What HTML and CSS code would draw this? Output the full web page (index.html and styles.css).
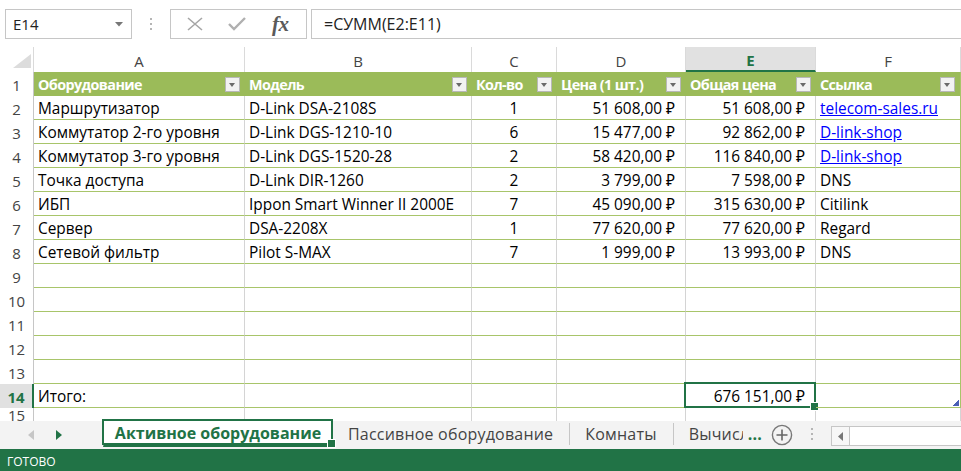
FILE: index.html
```html
<!DOCTYPE html>
<html lang="ru">
<head>
<meta charset="utf-8">
<link rel="stylesheet" href="styles.css">
</head>
<body>
<div class="app">
  <div class="fbar">
    <div class="namebox"><span>E14</span><svg class="nb-caret" width="8" height="5" viewBox="0 0 8 5"><path d="M0 0h8L4 4.5z" fill="#777"/></svg></div>
    <div class="vdots"><i></i><i></i><i></i></div>
    <div class="fxbtns">
      <svg width="18" height="14" viewBox="0 0 18 14"><path d="M2 1l14 12M16 1L2 13" stroke="#a6a6a6" stroke-width="1.6" fill="none"/></svg>
      <svg width="18" height="14" viewBox="0 0 18 14"><path d="M1 7l5 5L17 1" stroke="#b0b0b0" stroke-width="2.4" fill="none"/></svg>
      <span class="fx">fx</span>
    </div>
    <div class="formula">=СУММ(E2:E11)</div>
  </div>

  <div class="sheet">
    <div class="corner"><svg width="18" height="14" viewBox="0 0 18 14"><path d="M18 0V14H0z" fill="#dcdcdc"/></svg></div>
    <div class="ch">A</div><div class="ch">B</div><div class="ch">C</div><div class="ch">D</div><div class="ch sel">E</div><div class="ch">F</div>

    <div class="rh">1</div>
    <div class="th">Оборудование<span class="flt"></span></div>
    <div class="th">Модель<span class="flt"></span></div>
    <div class="th">Кол-во<span class="flt"></span></div>
    <div class="th">Цена (1 шт.)<span class="flt"></span></div>
    <div class="th">Общая цена<span class="flt"></span></div>
    <div class="th lastc">Ссылка<span class="flt"></span></div>

    <div class="rh">2</div>
    <div class="c">Маршрутизатор</div><div class="c">D-Link DSA-2108S</div><div class="c ctr">1</div><div class="c num">51 608,00 ₽</div><div class="c num">51 608,00 ₽</div><div class="c lastc"><a href="#" class="lnk">telecom-sales.ru</a></div>

    <div class="rh">3</div>
    <div class="c">Коммутатор 2-го уровня</div><div class="c">D-Link DGS-1210-10</div><div class="c ctr">6</div><div class="c num">15 477,00 ₽</div><div class="c num">92 862,00 ₽</div><div class="c lastc"><a href="#" class="lnk">D-link-shop</a></div>

    <div class="rh">4</div>
    <div class="c">Коммутатор 3-го уровня</div><div class="c">D-Link DGS-1520-28</div><div class="c ctr">2</div><div class="c num">58 420,00 ₽</div><div class="c num">116 840,00 ₽</div><div class="c lastc"><a href="#" class="lnk">D-link-shop</a></div>

    <div class="rh">5</div>
    <div class="c">Точка доступа</div><div class="c">D-Link DIR-1260</div><div class="c ctr">2</div><div class="c num">3 799,00 ₽</div><div class="c num">7 598,00 ₽</div><div class="c lastc">DNS</div>

    <div class="rh">6</div>
    <div class="c">ИБП</div><div class="c">Ippon Smart Winner II 2000E</div><div class="c ctr">7</div><div class="c num">45 090,00 ₽</div><div class="c num">315 630,00 ₽</div><div class="c lastc">Citilink</div>

    <div class="rh">7</div>
    <div class="c">Сервер</div><div class="c">DSA-2208X</div><div class="c ctr">1</div><div class="c num">77 620,00 ₽</div><div class="c num">77 620,00 ₽</div><div class="c lastc">Regard</div>

    <div class="rh">8</div>
    <div class="c">Сетевой фильтр</div><div class="c">Pilot S-MAX</div><div class="c ctr">7</div><div class="c num">1 999,00 ₽</div><div class="c num">13 993,00 ₽</div><div class="c lastc">DNS</div>

    <div class="rh">9</div>
    <div class="c"></div><div class="c"></div><div class="c"></div><div class="c"></div><div class="c"></div><div class="c lastc"></div>
    <div class="rh">10</div>
    <div class="c"></div><div class="c"></div><div class="c"></div><div class="c"></div><div class="c"></div><div class="c lastc"></div>
    <div class="rh">11</div>
    <div class="c"></div><div class="c"></div><div class="c"></div><div class="c"></div><div class="c"></div><div class="c lastc"></div>
    <div class="rh">12</div>
    <div class="c"></div><div class="c"></div><div class="c"></div><div class="c"></div><div class="c"></div><div class="c lastc"></div>
    <div class="rh">13</div>
    <div class="c"></div><div class="c"></div><div class="c"></div><div class="c"></div><div class="c"></div><div class="c lastc"></div>

    <div class="rh rsel">14</div>
    <div class="c">Итого:</div><div class="c"></div><div class="c"></div><div class="c"></div><div class="c num active">676 151,00 ₽</div><div class="c lastc resize"></div>

    <div class="rh">15</div>
    <div class="e"></div><div class="e"></div><div class="e"></div><div class="e"></div><div class="e"></div><div class="e elast"></div>
  </div>

  <div class="tabbar">
    <div class="nav">
      <svg width="6" height="10" viewBox="0 0 6 10"><path d="M6 0v10L0 5z" fill="#c6c6c6"/></svg>
      <svg width="6" height="10" viewBox="0 0 6 10"><path d="M0 0v10l6-5z" fill="#217346"/></svg>
    </div>
    <div class="tab active">Активное оборудование</div>
    <div class="tab">Пассивное оборудование</div>
    <div class="tsep"></div>
    <div class="tab">Комнаты</div>
    <div class="tsep"></div>
    <div class="tab clip"><span class="cut">Вычисл</span><span class="more">...</span></div>
    <svg class="plus" width="22" height="22" viewBox="0 0 22 22"><circle cx="11" cy="11" r="9.6" fill="none" stroke="#777" stroke-width="1.4"/><path d="M11 5.5v11M5.5 11h11" stroke="#666" stroke-width="1.6"/></svg>
    <div class="vdots small"><i></i><i></i><i></i></div>
    <div class="hscroll">
      <div class="hbtn"><svg width="5" height="9" viewBox="0 0 5 9"><path d="M5 0v9L0 4.5z" fill="#777"/></svg></div>
      <div class="htrack"></div>
    </div>
  </div>

  <div class="status">ГОТОВО</div>
</div>
</body>
</html>
```

FILE: styles.css
```css
* { box-sizing: border-box; }
html, body { margin: 0; padding: 0; }
body {
  width: 961px;
  height: 471px;
  overflow: hidden;
  background: #fff;
  font-family: "Open Sans", "Noto Sans", sans-serif;
  color: #000;
}
.app { width: 961px; height: 471px; display: flex; flex-direction: column; }

/* formula bar */
.fbar {
  height: 47px;
  display: flex;
  align-items: flex-start;
  padding: 9px 0 0 5px;
}
.namebox {
  width: 127px;
  height: 30px;
  border: 1px solid #c6c6c6;
  display: flex;
  align-items: center;
  justify-content: space-between;
  padding: 0 8px 0 7px;
  font-size: 15px;
  color: #222;
}
.vdots {
  width: 38px;
  height: 30px;
  display: flex;
  flex-direction: column;
  align-items: center;
  justify-content: center;
  gap: 3px;
}
.vdots i { display: block; width: 2px; height: 2px; background: #b5b5b5; }
.fxbtns {
  width: 137px;
  height: 30px;
  border: 1px solid #c6c6c6;
  display: flex;
  align-items: center;
  padding-left: 15px;
  gap: 24px;
}
.fx {
  font-family: "Liberation Serif", serif;
  font-style: italic;
  font-weight: bold;
  font-size: 21px;
  color: #5a5a5a;
  margin-left: 2px;
  letter-spacing: -0.5px;
}
.formula {
  flex: 1;
  height: 30px;
  margin-left: 4px;
  border-top: 1px solid #c6c6c6;
  border-bottom: 1px solid #c6c6c6;
  border-left: 1px solid #c6c6c6;
  padding-left: 12px;
  display: flex;
  align-items: center;
  font-size: 16px;
  color: #222;
}

/* sheet grid */
.sheet {
  display: grid;
  grid-template-columns: 34px 211px 227px 85px 129px 130px 145px;
  grid-template-rows: 25px repeat(14, 24px) 13px;
  height: 374px;
  overflow: hidden;
  font-size: 15.4px;
}
.corner {
  border-right: 1px solid #dadada;
  display: flex;
  align-items: flex-end;
  justify-content: flex-end;
  padding: 0 2px 4px 0;
}
.ch {
  border-right: 1px solid #dadada;
  display: flex;
  align-items: center;
  justify-content: center;
  color: #444;
  font-size: 15px;
  padding-top: 2px;
}
.ch.sel {
  background: #e1e1e1;
  color: #217346;
  font-weight: bold;
  border-bottom: 2px solid #217346;
  padding-top: 3px;
}
.rh {
  border-right: 1px solid #c6c6c6;
  display: flex;
  align-items: center;
  justify-content: center;
  color: #444;
  font-size: 15px;
  padding-top: 1px;
  background: #fff;
}
.rh.rsel {
  background: #e1e1e1;
  color: #217346;
  font-weight: bold;
  border-right: 2px solid #217346;
}
.th {
  background: #9bbb59;
  color: #fff;
  font-weight: 700;
  font-size: 14.4px;
  letter-spacing: -0.6px;
  display: flex;
  align-items: center;
  justify-content: space-between;
  padding: 1px 5px 0 4px;
  white-space: nowrap;
  overflow: hidden;
}
.flt {
  flex: none;
  width: 15px;
  height: 15px;
  background: #f2f2f2;
  border: 1px solid #b8b8b8;
  position: relative;
}
.flt::after {
  content: "";
  position: absolute;
  left: 3px;
  top: 5px;
  border-left: 3.5px solid transparent;
  border-right: 3.5px solid transparent;
  border-top: 4px solid #6a6a6a;
}
.c {
  border-right: 1px solid #d4d4d4;
  border-bottom: 1px solid #a8c56a;
  display: flex;
  align-items: center;
  padding: 2px 4px 0;
  white-space: nowrap;
}
.c.lastc, .th.lastc { border-right: 1px solid #a8c56a; }
.num { justify-content: flex-end; padding-right: 10px; }
.ctr { justify-content: center; }
.lnk { color: #0000ff; text-decoration: underline; }
.e { border-right: 1px solid #d4d4d4; }

.active { position: relative; }
.active::before {
  content: "";
  position: absolute;
  left: -2px; top: -2px; right: -1px; bottom: -1px;
  border: 2px solid #217346;
}
.active::after {
  content: "";
  position: absolute;
  right: -4px;
  bottom: -4px;
  width: 7px;
  height: 7px;
  background: #217346;
  border: 1px solid #fff;
}
.resize { position: relative; }
.resize::after {
  content: "";
  position: absolute;
  right: 1px;
  bottom: 1px;
  width: 6px;
  height: 6px;
  background: linear-gradient(135deg, transparent 50%, #4a5fb5 50%);
}

/* tabs */
.tabbar {
  height: 28px;
  background: #f3f3f3;
  display: flex;
  align-items: stretch;
  font-size: 16px;
  color: #444;
}
.nav {
  width: 103px;
  display: flex;
  align-items: center;
  gap: 22px;
  padding-left: 28px;
}
.tab {
  display: flex;
  align-items: center;
  padding: 0 16px 0 15px;
  white-space: nowrap;
  height: 26px;
  letter-spacing: 0.2px;
}
.tab.active {
  background: #fff;
  color: #217346;
  font-weight: bold;
  width: 230px;
  justify-content: center;
  border-left: 1px solid #d0d0d0;
  border-right: 1px solid #d0d0d0;
  border-bottom: 3px solid #217346;
  padding: 0;
  letter-spacing: 0;
}
.tsep { width: 1px; height: 22px; background: #c6c6c6; align-self: flex-start; margin-top: 2px; }
.tab.clip { padding-right: 0; }
.cut { display: inline-block; width: 54px; overflow: hidden; }
.more { color: #217346; font-weight: bold; margin-left: 5px; }
.plus { align-self: flex-start; margin-top: 3px; margin-left: 9px; }
.vdots.small { width: 38px; height: 26px; }
.hscroll {
  flex: 1;
  margin-top: 5px;
  height: 20px;
  border: 1px solid #c6c6c6;
  border-right: none;
  background: #fff;
  display: flex;
}
.hbtn {
  width: 18px;
  border-right: 1px solid #c6c6c6;
  background: #f7f7f7;
  display: flex;
  align-items: center;
  justify-content: center;
}
.htrack { flex: 1; }

.status {
  height: 22px;
  background: #217346;
  color: #fff;
  font-size: 12px;
  padding-left: 7px;
  display: flex;
  align-items: center;
  padding-top: 2px;
}
```
